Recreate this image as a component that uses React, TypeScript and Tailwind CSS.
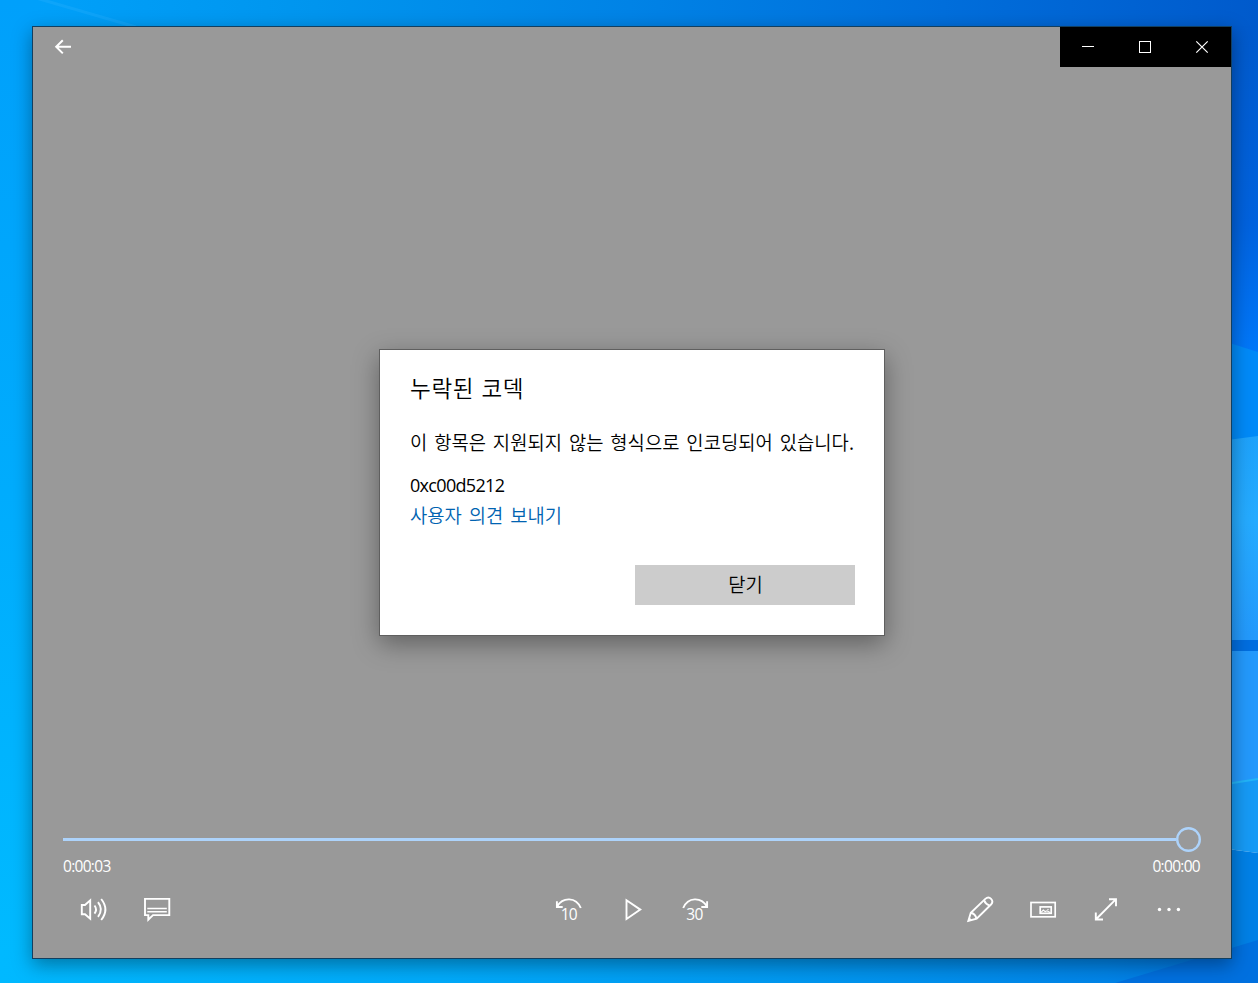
import React from "react";

const KOREAN = "font-['Noto_Sans_CJK_KR',sans-serif]";
const LATIN = "font-['Open_Sans','Noto_Sans_CJK_KR',sans-serif]";

function Wallpaper() {
  return (
    <svg className="absolute inset-0" width="1258" height="983" viewBox="0 0 1258 983">
      <defs>
        <linearGradient id="top" x1="0" x2="1" y1="0" y2="0">
          <stop offset="0" stopColor="#00a2fb" />
          <stop offset="0.25" stopColor="#0095ee" />
          <stop offset="0.5" stopColor="#0083e6" />
          <stop offset="0.75" stopColor="#006edb" />
          <stop offset="1" stopColor="#005acc" />
        </linearGradient>
        <linearGradient id="left" x1="0" x2="0" y1="0" y2="1">
          <stop offset="0" stopColor="#00a0fb" />
          <stop offset="0.5" stopColor="#00acfd" />
          <stop offset="1" stopColor="#00bbff" />
        </linearGradient>
        <linearGradient id="bottom" x1="0" x2="1" y1="0" y2="0">
          <stop offset="0" stopColor="#00b9ff" />
          <stop offset="0.35" stopColor="#00aafa" />
          <stop offset="0.65" stopColor="#0096ef" />
          <stop offset="0.88" stopColor="#0084e8" />
          <stop offset="1" stopColor="#0070dc" />
        </linearGradient>
        <linearGradient id="night" x1="0" x2="0" y1="0" y2="1">
          <stop offset="0" stopColor="#005acc" />
          <stop offset="0.6" stopColor="#0062de" />
          <stop offset="1" stopColor="#0078fa" />
        </linearGradient>
        <linearGradient id="pane" x1="0" x2="0" y1="0" y2="1">
          <stop offset="0" stopColor="#1ea2fb" />
          <stop offset="0.4" stopColor="#25abff" />
          <stop offset="1" stopColor="#2399fc" />
        </linearGradient>
      </defs>
      <rect width="1258" height="40" fill="url(#top)" />
      <rect width="40" height="983" fill="url(#left)" />
      <rect x="1220" y="26" width="38" height="330" fill="url(#night)" />
      <path d="M1220 340 L1258 352 V440 H1220Z" fill="#008af8" />
      <path d="M1220 441 L1258 436 V640 H1220Z" fill="url(#pane)" />
      <rect x="1220" y="640" width="38" height="11" fill="#006ee0" />
      <path d="M1220 651 H1258 V779 L1220 785Z" fill="#2399fc" />
      <path d="M1220 785 L1258 779 V853 L1220 848Z" fill="#169af5" />
      <path d="M1220 785 L1258 779" stroke="#22b4f8" strokeWidth="2" />
      <path d="M1220 848 L1258 853 V983 H1220Z" fill="#0080e6" />
      <rect y="950" width="1258" height="33" fill="url(#bottom)" />
      <path d="M1115 983 L1258 940 V983Z" fill="#0070df" />
      <path d="M36 -2 L136 27" stroke="#35b4ff" strokeWidth="3" opacity="0.25" />
    </svg>
  );
}

function Icon({ label, children }: { label: string; children: React.ReactNode }) {
  return (
    <button aria-label={label} className="h-[60px] w-[60px]">
      <svg width="60" height="60" viewBox="0 0 60 60" fill="none" stroke="white" strokeWidth="1.9">
        {children}
      </svg>
    </button>
  );
}

function TitleBar() {
  return (
    <div className="flex h-10 justify-between">
      <button aria-label="뒤로">
        <svg width="60" height="40" viewBox="0 0 60 40" fill="none" stroke="white" strokeWidth="2">
          <path d="M38 19.8H23.5M29.8 13.2L23.2 19.8L29.8 26.4" />
        </svg>
      </button>
      <div className="flex bg-black">
        <svg width="57" height="40" viewBox="0 0 57 40">
          <path d="M22 19.5H34" stroke="white" />
        </svg>
        <svg width="57" height="40" viewBox="0 0 57 40">
          <rect x="22.5" y="14.5" width="11" height="11" fill="none" stroke="white" />
        </svg>
        <svg width="57" height="40" viewBox="0 0 57 40">
          <path d="M22.3 14.3L33.7 25.7M33.7 14.3L22.3 25.7" stroke="white" strokeWidth="1.2" />
        </svg>
      </div>
    </div>
  );
}

function CodecDialog() {
  return (
    <div className={`${KOREAN} mt-[282px] flex h-[287px] w-[506px] flex-col self-center border border-[#5f5f5f] bg-white px-[30px] font-[350] text-black shadow-[0_8px_24px_rgba(0,0,0,0.36)]`}>
      <h1 className="mt-[21px] h-8 text-[22.5px] leading-8 font-[350] tracking-[0.7px] whitespace-nowrap [word-spacing:1.5px]">누락된 코덱</h1>
      <p className="mt-6 h-[30px] text-[18.75px] leading-[30px] tracking-[0.05px] whitespace-nowrap [word-spacing:2.6px]">
        이 항목은 지원되지 않는 형식으로 인코딩되어 있습니다.
      </p>
      <p className={`${LATIN} mt-[13px] h-[30px] text-[18px] leading-[30px] font-normal tracking-[-0.68px]`}>0xc00d5212</p>
      <a className="h-[30px] text-[18.75px] leading-[30px] whitespace-nowrap text-[#0063b1] [word-spacing:2.8px]">사용자 의견 보내기</a>
      <button className="mt-[35px] mr-[-1px] h-10 w-[220px] self-end bg-[#cccccc] pb-0.5 pl-px text-[18.75px] leading-[38px]">닫기</button>
    </div>
  );
}

function SeekBar() {
  return (
    <div className={`${LATIN} px-[30px] text-white`}>
      <div className="flex h-[25px] items-center">
        <div className="h-[3px] flex-1 bg-[#add3fb]" />
        <svg width="25" height="25" viewBox="0 0 25 25">
          <circle cx="12.5" cy="12.5" r="11.3" fill="none" stroke="#add3fb" strokeWidth="2.4" />
        </svg>
      </div>
      <div className="mt-1 flex h-5 justify-between pr-px text-[15.5px] leading-5 tracking-[-0.7px]">
        <span>0:00:03</span>
        <span>0:00:00</span>
      </div>
    </div>
  );
}

function Controls() {
  return (
    <div className="mt-1 grid grid-cols-[1fr_auto_1fr]">
      <div className="flex gap-[3px] pl-[31px]">
        <Icon label="볼륨">
          <path d="M17.8 25H21L26.2 20.3V38.7L21 34.3H17.8Z" />
          <path d="M30.5 25.5Q33.6 29.5 30.5 33.6M34 22.2Q39.8 29.5 34 36.8M37.2 19Q45.6 29.5 37.2 40" />
        </Icon>
        <Icon label="자막">
          <path d="M18 18.9H42.3V35.1H26L21.3 39.7V35.1H18Z" />
          <path d="M20.3 28.6H39.8M20.3 31.8H39.8" strokeWidth="1.5" />
        </Icon>
      </div>
      <div className="flex gap-[3px]">
        <Icon label="10초 뒤로">
          <path d="M17.9 21.2V27H23.7M18.2 26.4C23.8 16.8 37 16.8 41.8 28" />
          <text x="29.8" y="40.4" textAnchor="middle" fill="white" stroke="none" className="font-['Open_Sans',sans-serif] text-[15.5px] tracking-[-0.9px]">10</text>
        </Icon>
        <Icon label="재생">
          <path d="M24.5 20.2L38.3 29.6L24.5 39Z" />
        </Icon>
        <Icon label="30초 앞으로">
          <path d="M42.1 21.2V27H36.3M41.8 26.4C36.2 16.8 23 16.8 18.2 28" />
          <text x="29.6" y="40.4" textAnchor="middle" fill="white" stroke="none" className="font-['Open_Sans',sans-serif] text-[15.5px] tracking-[-0.6px]">30</text>
        </Icon>
      </div>
      <div className="flex justify-end gap-[3px] pr-8">
        <Icon label="편집">
          <path d="M18.3 41L20.8 32.7L35.3 18.9C39.5 15.3 44.6 20.5 41 24.5L26.7 38.7Z" />
          <path d="M34 20.2Q35.5 24.3 39.7 25.7M20.8 32.8Q25.5 33.8 26.5 38.8" />
          <path d="M18 41.5L19.3 37L22 40.2Z" fill="white" stroke="none" />
        </Icon>
        <Icon label="미니 보기">
          <rect x="18" y="22.5" width="24.2" height="14.3" strokeWidth="1.7" />
          <rect x="27.2" y="26.9" width="11" height="6.4" strokeWidth="1.7" />
          <path d="M28 32.3L30.3 30L32.2 31.6L34 30.8L37 32.6" strokeWidth="1.2" />
          <circle cx="35" cy="29.5" r="0.7" fill="white" stroke="none" />
        </Icon>
        <Icon label="전체 화면">
          <path d="M19.8 39.5L40 19.2M33 19.2H40V26.3M19.8 32.4V39.5H27" />
        </Icon>
        <Icon label="기타">
          <g fill="white" stroke="none">
            <circle cx="20.5" cy="29.5" r="1.7" />
            <circle cx="30" cy="29.5" r="1.7" />
            <circle cx="39.4" cy="29.5" r="1.7" />
          </g>
        </Icon>
      </div>
    </div>
  );
}

export default function App() {
  return (
    <div className="relative h-[983px] w-[1258px] overflow-hidden pt-[26px] pl-8">
      <Wallpaper />
      <main className="relative flex h-[933px] w-[1200px] flex-col border border-[#123f60] bg-[#999999] shadow-[0_6px_18px_rgba(0,0,0,0.36)]">
        <TitleBar />
        <CodecDialog />
        <div className="mt-auto pb-[18px]">
          <SeekBar />
          <Controls />
        </div>
      </main>
    </div>
  );
}
